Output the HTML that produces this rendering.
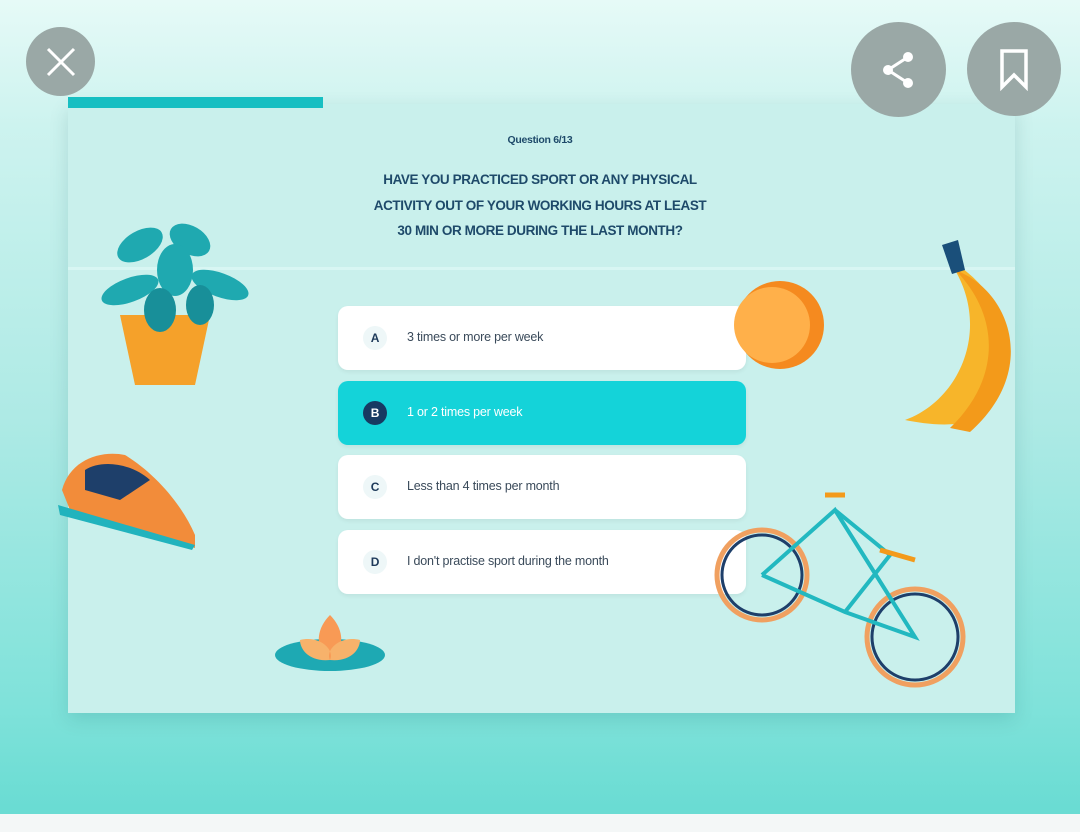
<!DOCTYPE html>
<html><head><meta charset="utf-8"><style>
*{margin:0;padding:0;box-sizing:border-box}
body{width:1080px;height:832px;overflow:hidden;background:linear-gradient(#e6faf7 0%,#cdf3ef 15%,#aeeae5 50%,#7fe2da 85%,#6adcd3 97%);font-family:"Liberation Sans",sans-serif;position:relative}
.bottom{position:absolute;left:0;top:814px;width:1080px;height:18px;background:#f4f7f7}
.card{position:absolute;left:68px;top:104px;width:947px;height:609px;background:#c9f0ec;box-shadow:0 6px 18px rgba(0,80,80,.15)}
.prog{position:absolute;left:68px;top:97px;width:255px;height:11px;background:#17bfc2}
.divider{position:absolute;left:68px;top:267px;width:947px;height:3px;background:#d8f6f3}
.btn{position:absolute;border-radius:50%;background:#9aa8a6;display:flex;align-items:center;justify-content:center}
.q{position:absolute;left:0;width:1080px;text-align:center;color:#1e4a6a;font-weight:bold}
.opt{position:absolute;left:338px;width:408px;height:64px;background:#fff;border-radius:10px;box-shadow:0 2px 4px rgba(0,0,0,.06);font-size:12.5px;color:#3a4a5a;letter-spacing:-0.2px}
.opt .l{position:absolute;left:25px;top:20px;width:24px;height:24px;border-radius:50%;background:#eef7f8;text-align:center;line-height:24px;font-weight:bold;font-size:12px;color:#1e3a5a}
.opt .t{position:absolute;left:69px;top:24px}
</style></head><body>
<div class="bottom"></div>
<div class="card"></div>
<div class="divider"></div>
<div class="prog"></div>
<div class="btn" style="left:26px;top:27px;width:69px;height:69px"><svg width="34" height="34" viewBox="0 0 34 34"><path d="M4 4L30 30M30 4L4 30" stroke="#fff" stroke-width="3"/></svg></div>
<div class="btn" style="left:851px;top:22px;width:95px;height:95px"><svg width="44" height="44" viewBox="0 0 44 44"><circle cx="31" cy="9" r="5" fill="#fff"/><circle cx="11" cy="22" r="5" fill="#fff"/><circle cx="31" cy="35" r="5" fill="#fff"/><path d="M31 9L11 22L31 35" stroke="#fff" stroke-width="3" fill="none"/></svg></div>
<div class="btn" style="left:967px;top:22px;width:94px;height:94px"><svg width="40" height="44" viewBox="0 0 40 44"><path d="M8 4H32V40L20 28L8 40Z" stroke="#fff" stroke-width="3.5" fill="none"/></svg></div>
<div class="q" style="top:134px;font-size:10.5px;letter-spacing:-0.3px">Question 6/13</div>
<div class="q" style="top:167px;font-size:13.5px;line-height:25.5px;letter-spacing:-0.4px">HAVE YOU PRACTICED SPORT OR ANY PHYSICAL<br>ACTIVITY OUT OF YOUR WORKING HOURS AT LEAST<br>30 MIN OR MORE DURING THE LAST MONTH?</div>
<div class="opt" style="top:306px"><div class="l">A</div><div class="t">3 times or more per week</div></div>
<div class="opt" style="top:381px;background:#14d3d9"><div class="l" style="background:#173a62;color:#fff">B</div><div class="t" style="color:#fff">1 or 2 times per week</div></div>
<div class="opt" style="top:455px"><div class="l">C</div><div class="t">Less than 4 times per month</div></div>
<div class="opt" style="top:530px"><div class="l">D</div><div class="t">I don't practise sport during the month</div></div>
<svg style="position:absolute;left:0;top:0" width="1080" height="832">
<path d="M120 315L210 315L195 385L135 385Z" fill="#f5a12a"/>
<g fill="#1fa9b0"><ellipse cx="140" cy="245" rx="25" ry="14" transform="rotate(-30 140 245)"/><ellipse cx="190" cy="240" rx="22" ry="14" transform="rotate(30 190 240)"/><ellipse cx="130" cy="290" rx="30" ry="12" transform="rotate(-20 130 290)"/><ellipse cx="220" cy="285" rx="30" ry="12" transform="rotate(20 220 285)"/><ellipse cx="175" cy="270" rx="18" ry="26"/><ellipse cx="160" cy="310" rx="16" ry="22" fill="#188f99"/><ellipse cx="200" cy="305" rx="14" ry="20" fill="#188f99"/></g>
<circle cx="780" cy="325" r="44" fill="#f58a1f"/><circle cx="772" cy="325" r="38" fill="#ffb04a"/>
<path d="M950 260C1000 290 1030 350 990 410C970 430 930 425 905 420C960 400 990 330 955 270Z" fill="#f7b52a"/>
<path d="M955 270C1010 290 1040 370 970 432L950 428C1000 380 1000 320 960 275Z" fill="#f39a1a"/>
<path d="M942 245L958 240L965 270L952 274Z" fill="#1a4f7a"/>
<path d="M62 490C70 460 100 450 125 455C150 470 180 500 195 535L195 548L70 510Z" fill="#f28c3a"/>
<path d="M85 470C100 460 130 462 150 480L120 500L85 490Z" fill="#1e3f6a"/>
<path d="M58 505L195 545L192 550L60 515Z" fill="#21b3bd"/>
<ellipse cx="330" cy="655" rx="55" ry="16" fill="#1ea9b3"/>
<path d="M330 615C345 630 345 650 330 660C315 650 315 630 330 615Z" fill="#f89a55"/>
<path d="M300 640C320 635 335 650 330 660C310 662 300 650 300 640ZM360 640C340 635 325 650 330 660C350 662 360 650 360 640Z" fill="#f7b26b"/>
<g fill="none" stroke-width="5"><circle cx="762" cy="575" r="45" stroke="#f0a060"/><circle cx="762" cy="575" r="40" stroke="#1e3f6a" stroke-width="3"/><circle cx="915" cy="637" r="48" stroke="#f0a060"/><circle cx="915" cy="637" r="43" stroke="#1e3f6a" stroke-width="3"/>
<path d="M762 575L835 510L915 637L845 612L762 575M835 510L890 555L845 612" stroke="#22b8c0" stroke-width="4"/>
<path d="M825 495L845 495M880 550L915 560" stroke="#f39a1a" stroke-width="5"/></g>
</svg>
</body></html>
